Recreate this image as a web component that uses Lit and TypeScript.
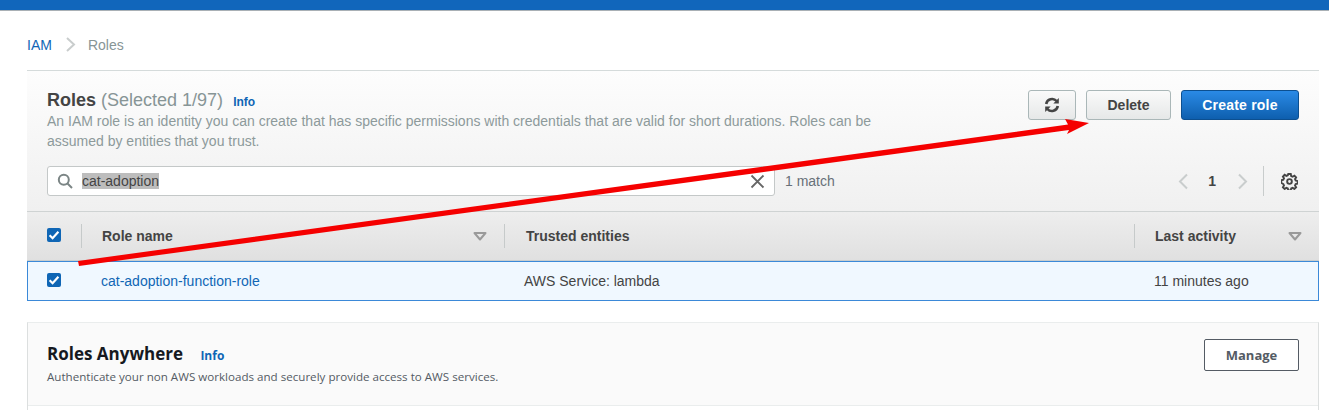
import { LitElement, html, css, svg } from 'lit';
import { customElement } from 'lit/decorators.js';

const check = html`<span class="cb"><svg width="14" height="14" viewBox="0 0 14 14"><path d="M2.6 7.2 5.6 10.2 11.400 3.800" fill="none" stroke="#fff" stroke-width="2.200"/></svg></span>`;
const caret = html`<svg class="caret" width="14" height="9" viewBox="0 0 14 9"><path d="M1.500 1h11L7 7.500z" fill="none" stroke="#9a9a9a" stroke-width="2" stroke-linejoin="round"/></svg>`;

@customElement('app-root')
export class AppRoot extends LitElement {
  static styles = css`
    :host {
      display: block;
      position: relative;
      width: 1329px;
      height: 410px;
      overflow: hidden;
      background: #fff;
      font-family: 'Liberation Sans', Arial, sans-serif;
      font-size: 14px;
      color: #444;
    }
    a { color: #0f66b5; text-decoration: none; }
    .topbar {
      height: 10px;
      background: #1166bb;
      border-bottom: 1px solid #a9b0b5;
    }
    .page { padding: 0 10px 0 27px; }
    .crumbs {
      height: 51px;
      padding-top: 8px;
      display: flex;
      align-items: center;
      font-size: 14px;
      color: #879596;
      border-bottom: 1px solid #d5dbdb;
    }
    .crumbs svg { margin: 0 12px 0 13px; }
    .panel {
      height: 141px;
      box-sizing: border-box;
      padding: 18px 20px 0 20px;
      background: linear-gradient(#fdfdfd, #f0f0f0);
      border-bottom: 1px solid #cfd3d3;
    }
    .panel-top { display: flex; justify-content: space-between; }
    h1 {
      margin: 0;
      font-size: 18px;
      line-height: 22px;
      font-weight: 700;
      color: #444;
    }
    h1 span { font-weight: 400; color: #879596; }
    h1 a { font-size: 12px; font-weight: 700; margin-left: 5px; }
    .desc {
      width: 850px;
      margin-top: -2px;
      line-height: 20px;
      color: #8d9a9b;
    }
    .actions { display: flex; gap: 10px; padding-top: 1px; }
    button {
      font: 700 14px 'Liberation Sans', Arial, sans-serif;
      height: 30px;
      border-radius: 3px;
      box-sizing: border-box;
      padding: 0;
      display: flex;
      align-items: center;
      justify-content: center;
    }
    .plain {
      color: #444;
      background: linear-gradient(#fafafa, #e6e8e8);
      border: 1px solid #aab7b8;
    }
    .refresh { width: 48px; }
    .delete { width: 85px; }
    .primary {
      width: 118px;
      color: #fff;
      letter-spacing: 0.2px;
      background: linear-gradient(#2a8ae6, #0e5fae);
      border: 1px solid #0c4f90;
    }
    .filter {
      display: flex;
      align-items: center;
      margin-top: 15px;
      height: 30px;
    }
    .search {
      width: 728px;
      height: 30px;
      box-sizing: border-box;
      display: flex;
      align-items: center;
      padding: 0 9px 0 9px;
      background: #fff;
      border: 1px solid #c4c8c8;
      border-radius: 3px;
      color: #444;
    }
    .search mark { background: #bdbdbd; color: #444; margin-left: 9px; line-height: 16px; }
    .search .x { margin-left: auto; }
    .match { margin-left: 10px; color: #687078; }
    .pager { margin-left: auto; display: flex; align-items: center; }
    .pager b { margin: 0 21px 0 19px; font-size: 14px; color: #444; }
    .pager .sep { width: 1px; height: 30px; background: #c8cccc; margin: 0 17px 0 15px; }
    .pager .gear { margin-right: 1px; }
    .head {
      height: 49px;
      display: grid;
      grid-template-columns: 54px 423px 630px 1fr;
      align-items: center;
      background: linear-gradient(#eeeeee, #e0e0e0);
      border-bottom: 1px solid #c9cdcd;
      box-sizing: border-box;
      font-weight: 700;
      color: #444;
    }
    .head > div, .row > div { display: flex; align-items: center; }
    .head .hc { height: 24px; border-left: 1px solid #c6caca; padding-left: 20px; }
    .head .hc.trusted { padding-left: 21px; }
    .head .hc .caret { margin-left: auto; margin-right: 17px; }
    .head .first { margin-top: -2px; }
    .first { padding-left: 20px; }
    .cb {
      width: 14px;
      height: 14px;
      background: #0f66b5;
      border-radius: 2px;
      display: inline-flex;
    }
    .row {
      height: 40px;
      display: grid;
      grid-template-columns: 53px 423px 630px 1fr;
      align-items: center;
      box-sizing: border-box;
      background: #f0f8ff;
      border: 1px solid #3b89d8;
      color: #444;
    }
    .row .first { padding-left: 19px; margin-top: -2px; }
    .row .cell { padding-left: 20px; }
    .card {
      margin-top: 21px;
      height: 100px;
      box-sizing: border-box;
      background: #fff;
      border: 1px solid #eaeded;
      border-right-color: #dcdfdf;
      border-left-color: #dcdfdf;
    }
    .card-head {
      height: 83px;
      box-sizing: border-box;
      background: #fafafa;
      border-bottom: 1px solid #eaeded;
      padding: 20px 19px 0 19px;
      display: flex;
      justify-content: space-between;
    }
    h2 {
      margin: 0;
      font: 700 17px/22px 'Open Sans', 'Noto Sans', sans-serif;
      color: #16191f;
    }
    h2 a { font-size: 12px; margin-left: 13px; }
    .card p {
      margin: 2px 0 0;
      font: 11.6px/16px 'Open Sans', 'Noto Sans', sans-serif;
      color: #545b64;
    }
    .manage {
      width: 95px;
      height: 32px;
      margin-top: -4px;
      background: #fff;
      border: 1px solid #545b64;
      border-radius: 2px;
      color: #545b64;
      font: 700 13px 'Open Sans', 'Noto Sans', sans-serif;
    }
    .arrow { position: absolute; left: 0; top: 0; pointer-events: none; }
  `;

  render() {
    return html`
      <div class="topbar"></div>
      <div class="page">
        <div class="crumbs">
          <a href="#">IAM</a>
          <svg width="11" height="15" viewBox="0 0 11 15"><path d="M2 1l7 6.500L2 14" fill="none" stroke="#c9cdcd" stroke-width="2"/></svg>
          <span>Roles</span>
        </div>
        <section class="panel">
          <div class="panel-top">
            <div>
              <h1>Roles <span>(Selected 1/97)</span> <a href="#">Info</a></h1>
              <div class="desc">An IAM role is an identity you can create that has specific permissions with credentials that are valid for short durations. Roles can be assumed by entities that you trust.</div>
            </div>
            <div class="actions">
              <button class="plain refresh" aria-label="Refresh">
                <svg width="16" height="16" viewBox="0 0 16 16" fill="none" stroke="#444" stroke-width="2.600"><path d="M2.200 7A6 6 0 0 1 12.600 4"/><path d="M13.800 9A6 6 0 0 1 3.400 12"/><path d="M14.800 1v5.500H9.300z" fill="#444" stroke="none"/><path d="M1.200 15V9.500h5.500z" fill="#444" stroke="none"/></svg>
              </button>
              <button class="plain delete">Delete</button>
              <button class="primary">Create role</button>
            </div>
          </div>
          <div class="filter">
            <div class="search">
              <svg width="16" height="16" viewBox="0 0 16 16" fill="none" stroke="#7b8585" stroke-width="2"><circle cx="6.800" cy="6.800" r="5"/><path d="M10.500 10.500 15 15"/></svg>
              <mark>cat-adoption</mark>
              <svg class="x" width="15" height="15" viewBox="0 0 15 15"><path d="M1.500 1.500l12 12M13.500 1.500l-12 12" stroke="#666" stroke-width="1.800" fill="none"/></svg>
            </div>
            <span class="match">1 match</span>
            <div class="pager">
              <svg width="11" height="17" viewBox="0 0 11 17"><path d="M9 1.500 2 8.500l7 7" fill="none" stroke="#c9cdcd" stroke-width="2"/></svg>
              <b>1</b>
              <svg width="11" height="17" viewBox="0 0 11 17"><path d="M2 1.500l7 7-7 7" fill="none" stroke="#c9cdcd" stroke-width="2"/></svg>
              <span class="sep"></span>
              <svg class="gear" width="17" height="17" viewBox="0 0 16 16" fill="none" stroke="#444" stroke-width="1.800"><circle cx="8" cy="8" r="2.200"/><path d="M6.800 1h2.400l.4 1.900 1.300.6 1.700-1 1.600 1.700-1 1.600.6 1.300 1.900.5v2.400l-1.900.4-.6 1.300 1 1.700-1.600 1.600-1.700-1-1.300.6-.4 1.900H6.800l-.4-1.900-1.300-.6-1.700 1-1.600-1.600 1-1.700-.6-1.300L.3 9.200V6.800l1.900-.5.6-1.300-1-1.600 1.600-1.700 1.700 1 1.300-.6z"/></svg>
            </div>
          </div>
        </section>
        <div class="head">
          <div class="first">${check}</div>
          <div class="hc">Role name ${caret}</div>
          <div class="hc trusted">Trusted entities</div>
          <div class="hc">Last activity ${caret}</div>
        </div>
        <div class="row">
          <div class="first">${check}</div>
          <div class="cell"><a href="#">cat-adoption-function-role</a></div>
          <div class="cell">AWS Service: lambda</div>
          <div class="cell">11 minutes ago</div>
        </div>
        <section class="card">
          <div class="card-head">
            <div>
              <h2>Roles Anywhere <a href="#">Info</a></h2>
              <p>Authenticate your non AWS workloads and securely provide access to AWS services.</p>
            </div>
            <button class="manage">Manage</button>
          </div>
        </section>
      </div>
      <svg class="arrow" width="1329" height="410" viewBox="0 0 1329 410">
        ${svg`<path d="M78 261 1068 124.500 1065 119 1089 123 1067 134 1069 130 79 266z" fill="#f50000"/>`}
      </svg>
    `;
  }
}
